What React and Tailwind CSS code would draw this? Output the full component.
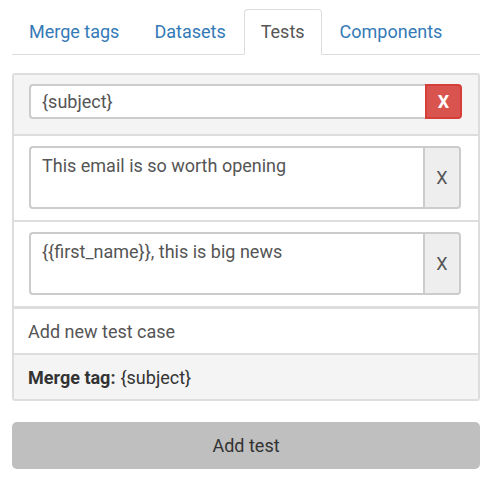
import React, { useState } from 'react';

const tabs = ['Merge tags', 'Datasets', 'Tests', 'Components'];

const initialCases = ['This email is so worth opening', '{{first_name}}, this is big news'];

const App = () => {
  const [active, setActive] = useState('Tests');
  const [tag, setTag] = useState('{subject}');
  const [cases, setCases] = useState(initialCases);

  const font = { fontFamily: 'Roboto, "Liberation Sans", sans-serif' };

  return (
    <div className="w-[492px] h-[488px] bg-white px-3 pt-[9px] text-[18px] text-[#333]" style={font}>
      {/* Tabs */}
      <ul className="flex border-b border-[#ddd] h-[46px]">
        {tabs.map(t => {
          const isActive = t === active;
          return (
            <li key={t} className="mr-[1px] -mb-px">
              <button
                type="button"
                onClick={() => setActive(t)}
                className={`h-[46px] px-4 leading-[24px] rounded-t-[4px] border ${
                  isActive
                    ? 'border-[#ddd] border-b-white bg-white text-[#555]'
                    : 'border-transparent text-[#337ab7]'
                }`}
              >
                {t}
              </button>
            </li>
          );
        })}
      </ul>

      {/* Test panel */}
      <div className="mt-[18px] border-2 border-[#ddd] rounded-[3px] overflow-hidden">
        <div className="bg-[#f4f4f4] pl-[15px] pr-[16px] pt-[9px] pb-[15px] border-b-2 border-[#ddd]">
          <div className="flex h-[35px]">
            <input
              value={tag}
              onChange={e => setTag(e.target.value)}
              className="flex-1 min-w-0 bg-white border-2 border-r-0 border-[#ccc] rounded-l-[4px] px-[11px] text-[#555] outline-none"
              style={font}
            />
            <button
              type="button"
              className="w-[37px] bg-[#d9534f] border-2 border-[#d43f3a] rounded-r-[4px] text-white font-bold"
            >
              X
            </button>
          </div>
        </div>

        {cases.map((c, i) => (
          <div
            key={i}
            className={`bg-white pl-[15px] pr-[17px] pt-[10px] pb-[11px] border-[#ddd] ${
              i === cases.length - 1 ? 'border-b-[3px]' : 'border-b-2'
            }`}
          >
            <div className="flex h-[63px]">
              <textarea
                value={c}
                onChange={e => setCases(cases.map((x, j) => (j === i ? e.target.value : x)))}
                className="flex-1 min-w-0 resize-none border-2 border-r-0 border-[#ccc] rounded-l-[4px] px-[11px] pt-[6px] leading-[24px] text-[#555] outline-none"
                style={font}
              />
              <button
                type="button"
                onClick={() => setCases(cases.filter((_, j) => j !== i))}
                className="w-[38px] bg-[#eee] border-2 border-[#ccc] rounded-r-[4px] text-[#555]"
              >
                X
              </button>
            </div>
          </div>
        ))}

        <div className="bg-white h-[46px] flex items-center px-[14px] text-[#555] border-b-2 border-[#ddd]">
          Add new test case
        </div>
        <div className="bg-[#f4f4f4] h-[44px] flex items-center px-[14px]">
          <span className="font-bold mr-[5px]">Merge tag:</span>
          <span>{tag}</span>
        </div>
      </div>

      <button
        type="button"
        className="mt-[21px] w-full h-[47px] bg-[#bfbfbf] rounded-[5px] text-[#333]"
      >
        Add test
      </button>
    </div>
  );
};

export default App;
